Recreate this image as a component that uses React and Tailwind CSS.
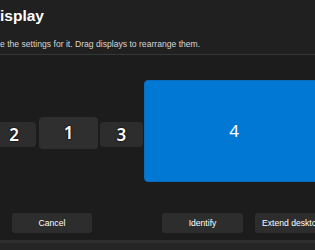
import React from 'react';

const App = () => {
  return (
    <div className="w-[315px] h-[250px] overflow-hidden bg-[#1c1c1c] flex flex-col font-['Liberation_Sans',Arial,sans-serif] text-white">
      {/* Dialog header */}
      <div className="h-[55px] shrink-0 bg-[#202020] border-b border-[#363636] pt-[6px]">
        <h1 className="text-[15.5px] leading-[20px] font-bold whitespace-nowrap">isplay</h1>
        <p className="mt-[11.5px] text-[8.6px] leading-[12px] text-[#d6d6d6] whitespace-nowrap">
          e the settings for it. Drag displays to rearrange them.
        </p>
      </div>

      {/* Display arrangement */}
      <div className="flex-1 flex flex-col">
        <div className="flex items-start mt-[25px] h-[102px]">
          <div className="shrink-0 ml-[-8px] mt-[42px] w-[44px] h-[25px] rounded-[4px] bg-[#2d2d2d] flex items-center justify-center font-['Noto_Sans',sans-serif] text-[17px] font-semibold [text-shadow:0_0_2px_#000,0_0_1px_#000]">2</div>
          <div className="shrink-0 ml-[3px] mt-[37px] w-[59px] h-[32px] rounded-[4px] bg-[#2f2f2f] flex items-center justify-center font-['Noto_Sans',sans-serif] text-[17px] font-semibold [text-shadow:0_0_2px_#000,0_0_1px_#000]">1</div>
          <div className="shrink-0 ml-[1.5px] mt-[42px] w-[43.5px] h-[25px] rounded-[4px] bg-[#2d2d2d] flex items-center justify-center font-['Noto_Sans',sans-serif] text-[17px] font-semibold [text-shadow:0_0_2px_#000,0_0_1px_#000]">3</div>
          <div className="shrink-0 ml-[1px] w-[180px] h-[102px] rounded-[4px] bg-[#0078d4] border border-[#0a6cbd] flex items-center justify-center font-['Noto_Sans',sans-serif] text-[17px]">4</div>
        </div>

        <div className="flex items-center mt-[31px] h-[20px] text-[8.6px]">
          <button className="shrink-0 ml-[12px] w-[80px] h-[20px] rounded-[3px] bg-[#2d2d2d] text-white">Cancel</button>
          <button className="shrink-0 ml-[70px] w-[81px] h-[20px] rounded-[3px] bg-[#2d2d2d] text-white">Identify</button>
          <button className="shrink-0 ml-[12px] px-[7px] h-[20px] rounded-[3px] bg-[#2d2d2d] text-white whitespace-nowrap">Extend desktop</button>
        </div>
      </div>

      {/* Footer edge */}
      <div className="h-[10px] shrink-0 bg-[#252525] border-t-[3px] border-[#2e2e2e]"></div>
    </div>
  );
};

export default App;
